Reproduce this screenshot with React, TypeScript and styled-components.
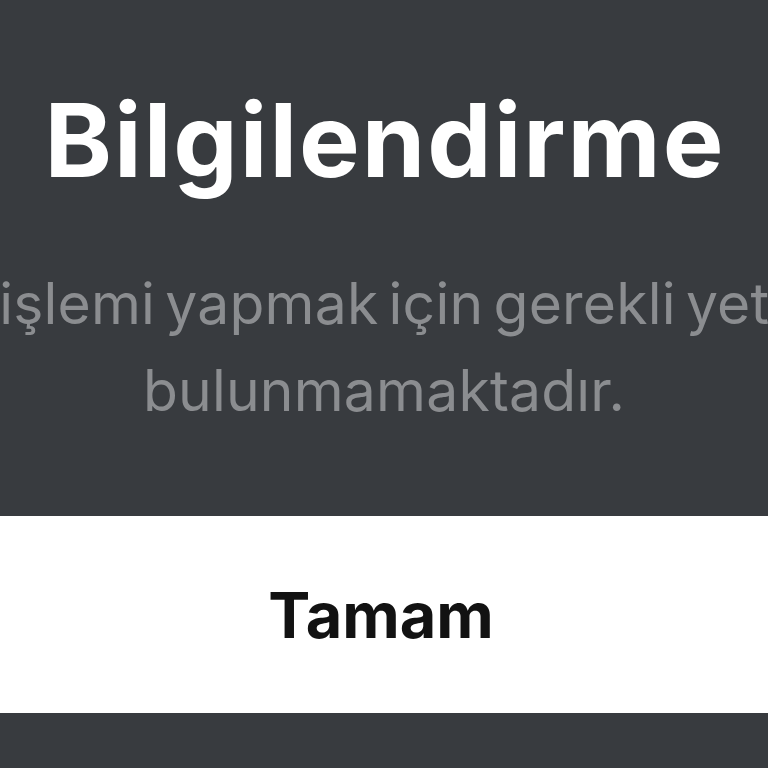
import React from "react";
import styled, { createGlobalStyle } from "styled-components";

const Global = createGlobalStyle`
  html, body { margin: 0; padding: 0; background: #383b3f; }
  body { font-family: Inter, "Noto Sans", sans-serif; overflow: hidden; }
`;

const Screen = styled.div`
  width: 768px;
  height: 768px;
  background: #383b3f;
  display: flex;
  flex-direction: column;
  overflow: hidden;
`;

const Title = styled.h1`
  margin: 0;
  padding-top: 78px;
  font-size: 102px;
  line-height: 124px;
  font-weight: 700;
  color: #ffffff;
  text-align: center;
  letter-spacing: 2px;
  padding-left: 2px;
`;

const MessageWrap = styled.div`
  display: flex;
  justify-content: center;
  margin-top: 58px;
  height: 200px;
`;

const Message = styled.p`
  flex: 0 0 1100px;
  width: 1100px;
  margin: 0;
  box-sizing: border-box;
  font-size: 57px;
  line-height: 87px;
  font-weight: 400;
  letter-spacing: 0.2px;
  word-spacing: -6px;
  text-indent: 44px;
  color: #8b8d90;
  text-align: center;
`;

const ButtonBand = styled.button`
  flex: 0 0 197px;
  margin-top: auto;
  margin-bottom: 55px;
  border: none;
  background: #ffffff;
  color: #121212;
  font-family: Inter, "Noto Sans", sans-serif;
  font-size: 63px;
  font-weight: 700;
  display: flex;
  align-items: center;
  justify-content: center;
  padding: 0 6px 0 0;
`;

export default function App() {
  return (
    <>
      <Global />
      <Screen>
        <Title>Bilgilendirme</Title>
        <MessageWrap>
          <Message>Bu işlemi yapmak için gerekli yetkiniz bulunmamaktadır.</Message>
        </MessageWrap>
        <ButtonBand>Tamam</ButtonBand>
      </Screen>
    </>
  );
}
